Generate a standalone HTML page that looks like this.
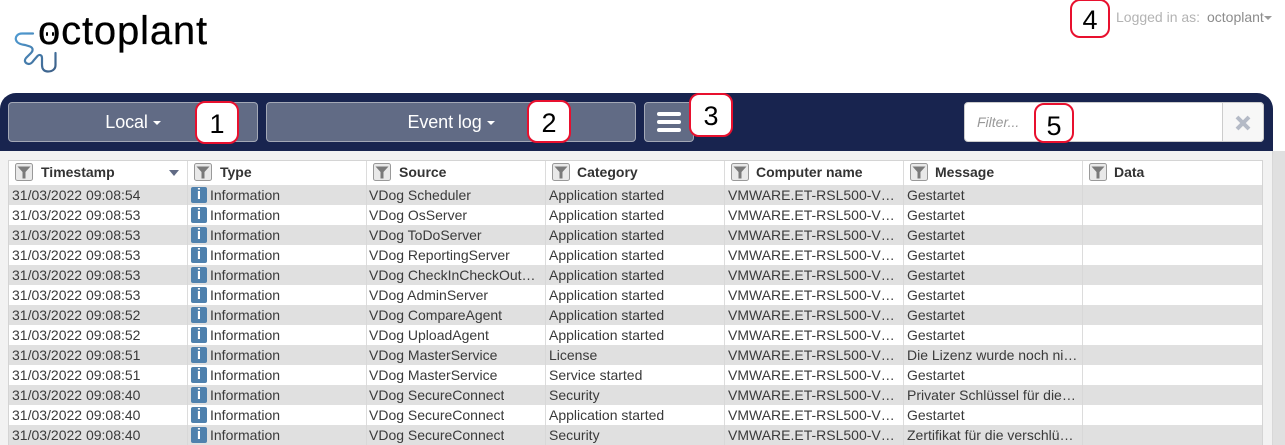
<!DOCTYPE html>
<html><head><meta charset="utf-8">
<style>
*{box-sizing:border-box}
html,body{margin:0;padding:0;width:1285px;height:445px;overflow:hidden;background:#fff;font-family:"Liberation Sans",sans-serif;color:#333}
.abs{position:absolute}
#bar{left:0;top:93px;width:1273px;height:58px;background:#18244f;border-radius:16px 16px 0 0}
#main{left:0;top:151px;width:1273px;height:294px;background:#f2f2f2;border-right:1px solid #d8d8d8}
#side{left:1273px;top:151px;width:12px;height:294px;background:#e0e0e0}
.btn{top:102px;height:40px;background:#616b85;border:1px solid #a3a8b6;border-radius:4px;color:#fff;font-size:18px;text-align:center;line-height:38px;letter-spacing:-.1px}
.caret{display:inline-block;width:0;height:0;border-left:4px solid transparent;border-right:4px solid transparent;border-top:4px solid currentColor;vertical-align:middle;margin-left:0}
.call{background:#fff;border:2px solid #e8102e;border-radius:10px;color:#000;text-align:center;font-family:"Liberation Sans",sans-serif;font-size:27px}
#tbl{left:8px;top:160px;width:1255px;height:285px;background:#fff;border:1px solid #d4d4d4;border-bottom:0}
.hd{position:absolute;top:0;height:24px;border-right:1px solid #dcdcdc;background:#fff;font-weight:bold;font-size:14px;line-height:23px;color:#333}
.hd span{position:absolute;left:32px;top:0;white-space:nowrap}
.hd svg{position:absolute;left:6px;top:2px}
.row{position:absolute;left:0;width:1253px;height:20px;font-size:14px;line-height:20px;color:#3a3a3a}
.row.g{background:#e0e0e0}
.c{position:absolute;top:0;height:20px;white-space:nowrap;overflow:hidden}
.sep{position:absolute;top:0;width:1px;height:20px;background:#dcdcdc}
.g .sep{background:#d8d8d8}
.ic{position:absolute;left:182px;top:2px;width:16px;height:16px;background:#4f81ad;border-radius:2px;color:#fff;font-weight:bold;font-size:15px;line-height:16px;text-align:center}
</style></head><body>

<div class="abs" id="main"></div>
<div class="abs" id="side"></div>
<div class="abs" id="bar"></div>

<div class="abs" style="left:38px;top:6px;font-size:40px;line-height:50px;color:#000;font-family:'Liberation Sans',sans-serif;white-space:nowrap;letter-spacing:.85px;-webkit-text-stroke:.3px #000">octoplant</div>
<div class="abs" style="left:46px;top:32px;width:2px;height:4px;background:#000;border-radius:1px"></div>
<div class="abs" style="left:52px;top:32px;width:2px;height:4px;background:#000;border-radius:1px"></div>
<svg class="abs" style="left:14px;top:31px" width="46" height="44" viewBox="0 0 46 44" fill="none">
<defs><linearGradient id="lg" x1="0" y1="0" x2="1" y2="1"><stop offset="0" stop-color="#4f9bd2"/><stop offset="1" stop-color="#3d5f87"/></linearGradient></defs>
<path d="M19 2.500H8C3.500 2.500 1 6 2 9C3 12.500 7 13.500 11 14L16 15.500C19.500 17 19 20 17 22L12 27C10 29.500 11 31.500 13 32.500C16 34 18 32 20 29L23.500 25C25.500 23 28 24 28 27V34C28 38.500 30.500 40.500 34 40.500C38 40.500 41.500 38.500 41.500 34V22" stroke="url(#lg)" stroke-width="2.200" stroke-linecap="round"/>
</svg>

<div class="abs" style="left:1116px;top:9px;font-size:14px;line-height:16px;color:#b3b3b3;white-space:nowrap">Logged in as:</div>
<div class="abs" style="left:1207px;top:9px;font-size:14px;line-height:16px;color:#8c8c8c;white-space:nowrap">octoplant</div>
<div class="abs" style="left:1264px;top:16px;width:0;height:0;border-left:4px solid transparent;border-right:4px solid transparent;border-top:4px solid #999"></div>

<div class="abs btn" style="left:8px;width:250px">Local <i class="caret"></i></div>
<div class="abs btn" style="left:266px;width:370px">Event log <i class="caret"></i></div>
<div class="abs btn" style="left:644px;width:50px"></div>
<div class="abs" style="left:657px;top:112px;width:24px;height:4px;background:#fff;border-radius:2px"></div>
<div class="abs" style="left:657px;top:120px;width:24px;height:4px;background:#fff;border-radius:2px"></div>
<div class="abs" style="left:657px;top:128px;width:24px;height:4px;background:#fff;border-radius:2px"></div>

<div class="abs" style="left:964px;top:102px;width:300px;height:40px;background:#fff;border:1px solid #ccc;border-radius:4px"></div>
<div class="abs" style="left:977px;top:113px;font-size:14px;line-height:18px;font-style:italic;color:#999">Filter...</div>
<div class="abs" style="left:1222px;top:102px;width:42px;height:40px;background:#f7f7f7;border:1px solid #ccc;border-radius:0 4px 4px 0"></div>
<svg class="abs" style="left:1235px;top:115px" width="16" height="16" viewBox="0 0 16 16"><path d="M2 2L14 14M14 2L2 14" stroke="#b4bac6" stroke-width="4"/></svg>

<div class="abs" id="tbl">
<div class="hd" style="left:0;width:179px"><svg width="18" height="18" viewBox="0 0 18 18"><rect x=".5" y=".5" width="17" height="17" rx="2" fill="#e9e9e9" stroke="#999"/><path d="M2.500 3.500H15.500L10.500 9V15.500H7.500V9Z" fill="#7a7a7a"/></svg><span>Timestamp</span><i style="position:absolute;left:160px;top:9px;width:0;height:0;border-left:5px solid transparent;border-right:5px solid transparent;border-top:6px solid #616b85"></i></div>
<div class="hd" style="left:179px;width:179px"><svg width="18" height="18" viewBox="0 0 18 18"><rect x=".5" y=".5" width="17" height="17" rx="2" fill="#e9e9e9" stroke="#999"/><path d="M2.500 3.500H15.500L10.500 9V15.500H7.500V9Z" fill="#7a7a7a"/></svg><span>Type</span></div>
<div class="hd" style="left:358px;width:179px"><svg width="18" height="18" viewBox="0 0 18 18"><rect x=".5" y=".5" width="17" height="17" rx="2" fill="#e9e9e9" stroke="#999"/><path d="M2.500 3.500H15.500L10.500 9V15.500H7.500V9Z" fill="#7a7a7a"/></svg><span>Source</span></div>
<div class="hd" style="left:537px;width:179px"><svg width="18" height="18" viewBox="0 0 18 18"><rect x=".5" y=".5" width="17" height="17" rx="2" fill="#e9e9e9" stroke="#999"/><path d="M2.500 3.500H15.500L10.500 9V15.500H7.500V9Z" fill="#7a7a7a"/></svg><span style="left:31px">Category</span></div>
<div class="hd" style="left:716px;width:179px"><svg width="18" height="18" viewBox="0 0 18 18"><rect x=".5" y=".5" width="17" height="17" rx="2" fill="#e9e9e9" stroke="#999"/><path d="M2.500 3.500H15.500L10.500 9V15.500H7.500V9Z" fill="#7a7a7a"/></svg><span style="left:31px">Computer name</span></div>
<div class="hd" style="left:895px;width:179px"><svg width="18" height="18" viewBox="0 0 18 18"><rect x=".5" y=".5" width="17" height="17" rx="2" fill="#e9e9e9" stroke="#999"/><path d="M2.500 3.500H15.500L10.500 9V15.500H7.500V9Z" fill="#7a7a7a"/></svg><span style="left:31px">Message</span></div>
<div class="hd" style="left:1074px;width:179px;border-right:0"><svg width="18" height="18" viewBox="0 0 18 18"><rect x=".5" y=".5" width="17" height="17" rx="2" fill="#e9e9e9" stroke="#999"/><path d="M2.500 3.500H15.500L10.500 9V15.500H7.500V9Z" fill="#7a7a7a"/></svg><span style="left:31px">Data</span></div>

<div class="row g" style="top:24px"><i class="sep" style="left:178px"></i><i class="sep" style="left:357px"></i><i class="sep" style="left:536px"></i><i class="sep" style="left:715px"></i><i class="sep" style="left:894px"></i><i class="sep" style="left:1073px"></i><div class="c" style="left:3px">31/03/2022 09:08:54</div><div class="ic">i</div><div class="c" style="left:201px">Information</div><div class="c" style="left:360px">VDog Scheduler</div><div class="c" style="left:540px">Application started</div><div class="c" style="left:719px">VMWARE.ET-RSL500-V…</div><div class="c" style="left:898px">Gestartet</div></div>
<div class="row" style="top:44px"><i class="sep" style="left:178px"></i><i class="sep" style="left:357px"></i><i class="sep" style="left:536px"></i><i class="sep" style="left:715px"></i><i class="sep" style="left:894px"></i><i class="sep" style="left:1073px"></i><div class="c" style="left:3px">31/03/2022 09:08:53</div><div class="ic">i</div><div class="c" style="left:201px">Information</div><div class="c" style="left:360px">VDog OsServer</div><div class="c" style="left:540px">Application started</div><div class="c" style="left:719px">VMWARE.ET-RSL500-V…</div><div class="c" style="left:898px">Gestartet</div></div>
<div class="row g" style="top:64px"><i class="sep" style="left:178px"></i><i class="sep" style="left:357px"></i><i class="sep" style="left:536px"></i><i class="sep" style="left:715px"></i><i class="sep" style="left:894px"></i><i class="sep" style="left:1073px"></i><div class="c" style="left:3px">31/03/2022 09:08:53</div><div class="ic">i</div><div class="c" style="left:201px">Information</div><div class="c" style="left:360px">VDog ToDoServer</div><div class="c" style="left:540px">Application started</div><div class="c" style="left:719px">VMWARE.ET-RSL500-V…</div><div class="c" style="left:898px">Gestartet</div></div>
<div class="row" style="top:84px"><i class="sep" style="left:178px"></i><i class="sep" style="left:357px"></i><i class="sep" style="left:536px"></i><i class="sep" style="left:715px"></i><i class="sep" style="left:894px"></i><i class="sep" style="left:1073px"></i><div class="c" style="left:3px">31/03/2022 09:08:53</div><div class="ic">i</div><div class="c" style="left:201px">Information</div><div class="c" style="left:360px">VDog ReportingServer</div><div class="c" style="left:540px">Application started</div><div class="c" style="left:719px">VMWARE.ET-RSL500-V…</div><div class="c" style="left:898px">Gestartet</div></div>
<div class="row g" style="top:104px"><i class="sep" style="left:178px"></i><i class="sep" style="left:357px"></i><i class="sep" style="left:536px"></i><i class="sep" style="left:715px"></i><i class="sep" style="left:894px"></i><i class="sep" style="left:1073px"></i><div class="c" style="left:3px">31/03/2022 09:08:53</div><div class="ic">i</div><div class="c" style="left:201px">Information</div><div class="c" style="left:360px">VDog CheckInCheckOut…</div><div class="c" style="left:540px">Application started</div><div class="c" style="left:719px">VMWARE.ET-RSL500-V…</div><div class="c" style="left:898px">Gestartet</div></div>
<div class="row" style="top:124px"><i class="sep" style="left:178px"></i><i class="sep" style="left:357px"></i><i class="sep" style="left:536px"></i><i class="sep" style="left:715px"></i><i class="sep" style="left:894px"></i><i class="sep" style="left:1073px"></i><div class="c" style="left:3px">31/03/2022 09:08:53</div><div class="ic">i</div><div class="c" style="left:201px">Information</div><div class="c" style="left:360px">VDog AdminServer</div><div class="c" style="left:540px">Application started</div><div class="c" style="left:719px">VMWARE.ET-RSL500-V…</div><div class="c" style="left:898px">Gestartet</div></div>
<div class="row g" style="top:144px"><i class="sep" style="left:178px"></i><i class="sep" style="left:357px"></i><i class="sep" style="left:536px"></i><i class="sep" style="left:715px"></i><i class="sep" style="left:894px"></i><i class="sep" style="left:1073px"></i><div class="c" style="left:3px">31/03/2022 09:08:52</div><div class="ic">i</div><div class="c" style="left:201px">Information</div><div class="c" style="left:360px">VDog CompareAgent</div><div class="c" style="left:540px">Application started</div><div class="c" style="left:719px">VMWARE.ET-RSL500-V…</div><div class="c" style="left:898px">Gestartet</div></div>
<div class="row" style="top:164px"><i class="sep" style="left:178px"></i><i class="sep" style="left:357px"></i><i class="sep" style="left:536px"></i><i class="sep" style="left:715px"></i><i class="sep" style="left:894px"></i><i class="sep" style="left:1073px"></i><div class="c" style="left:3px">31/03/2022 09:08:52</div><div class="ic">i</div><div class="c" style="left:201px">Information</div><div class="c" style="left:360px">VDog UploadAgent</div><div class="c" style="left:540px">Application started</div><div class="c" style="left:719px">VMWARE.ET-RSL500-V…</div><div class="c" style="left:898px">Gestartet</div></div>
<div class="row g" style="top:184px"><i class="sep" style="left:178px"></i><i class="sep" style="left:357px"></i><i class="sep" style="left:536px"></i><i class="sep" style="left:715px"></i><i class="sep" style="left:894px"></i><i class="sep" style="left:1073px"></i><div class="c" style="left:3px">31/03/2022 09:08:51</div><div class="ic">i</div><div class="c" style="left:201px">Information</div><div class="c" style="left:360px">VDog MasterService</div><div class="c" style="left:540px">License</div><div class="c" style="left:719px">VMWARE.ET-RSL500-V…</div><div class="c" style="left:898px">Die Lizenz wurde noch ni…</div></div>
<div class="row" style="top:204px"><i class="sep" style="left:178px"></i><i class="sep" style="left:357px"></i><i class="sep" style="left:536px"></i><i class="sep" style="left:715px"></i><i class="sep" style="left:894px"></i><i class="sep" style="left:1073px"></i><div class="c" style="left:3px">31/03/2022 09:08:51</div><div class="ic">i</div><div class="c" style="left:201px">Information</div><div class="c" style="left:360px">VDog MasterService</div><div class="c" style="left:540px">Service started</div><div class="c" style="left:719px">VMWARE.ET-RSL500-V…</div><div class="c" style="left:898px">Gestartet</div></div>
<div class="row g" style="top:224px"><i class="sep" style="left:178px"></i><i class="sep" style="left:357px"></i><i class="sep" style="left:536px"></i><i class="sep" style="left:715px"></i><i class="sep" style="left:894px"></i><i class="sep" style="left:1073px"></i><div class="c" style="left:3px">31/03/2022 09:08:40</div><div class="ic">i</div><div class="c" style="left:201px">Information</div><div class="c" style="left:360px">VDog SecureConnect</div><div class="c" style="left:540px">Security</div><div class="c" style="left:719px">VMWARE.ET-RSL500-V…</div><div class="c" style="left:898px">Privater Schlüssel für die…</div></div>
<div class="row" style="top:244px"><i class="sep" style="left:178px"></i><i class="sep" style="left:357px"></i><i class="sep" style="left:536px"></i><i class="sep" style="left:715px"></i><i class="sep" style="left:894px"></i><i class="sep" style="left:1073px"></i><div class="c" style="left:3px">31/03/2022 09:08:40</div><div class="ic">i</div><div class="c" style="left:201px">Information</div><div class="c" style="left:360px">VDog SecureConnect</div><div class="c" style="left:540px">Application started</div><div class="c" style="left:719px">VMWARE.ET-RSL500-V…</div><div class="c" style="left:898px">Gestartet</div></div>
<div class="row g" style="top:264px"><i class="sep" style="left:178px"></i><i class="sep" style="left:357px"></i><i class="sep" style="left:536px"></i><i class="sep" style="left:715px"></i><i class="sep" style="left:894px"></i><i class="sep" style="left:1073px"></i><div class="c" style="left:3px">31/03/2022 09:08:40</div><div class="ic">i</div><div class="c" style="left:201px">Information</div><div class="c" style="left:360px">VDog SecureConnect</div><div class="c" style="left:540px">Security</div><div class="c" style="left:719px">VMWARE.ET-RSL500-V…</div><div class="c" style="left:898px">Zertifikat für die verschlü…</div></div>
</div>

<div class="abs call" style="left:195px;top:101px;width:44px;height:43px;line-height:42px">1</div>
<div class="abs call" style="left:527px;top:100px;width:44px;height:43px;line-height:42px">2</div>
<div class="abs call" style="left:689px;top:93px;width:44px;height:44px;line-height:43px">3</div>
<div class="abs call" style="left:1070px;top:-1px;width:40px;height:39px;line-height:38px">4</div>
<div class="abs call" style="left:1034px;top:103px;width:40px;height:40px;line-height:42px">5</div>

</body></html>
